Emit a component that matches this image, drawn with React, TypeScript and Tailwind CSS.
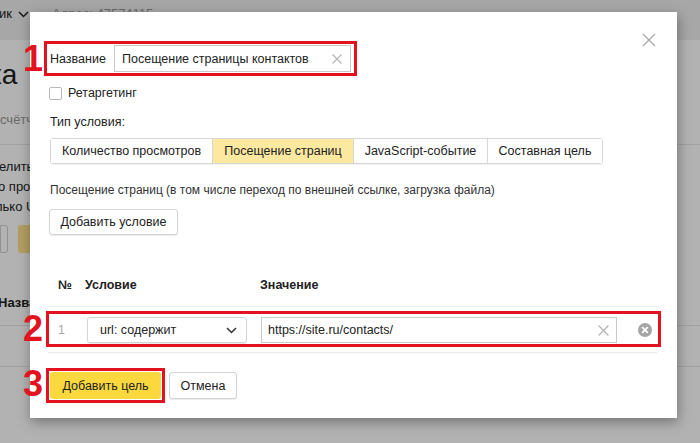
import type { ReactNode } from "react";

const conditionTypes = [
  { label: "Количество просмотров", width: "w-[161px]", active: false },
  { label: "Посещение страниц", width: "w-[141px]", active: true },
  { label: "JavaScript-событие", width: "w-[134px]", active: false },
  { label: "Составная цель", width: "w-[115px]", active: false },
];

function CloseIcon() {
  return (
    <svg width="14" height="14" viewBox="0 0 14 14" fill="none" stroke="#a9a9a9" strokeWidth="1.3">
      <path d="M1 1l12 12M13 1L1 13" />
    </svg>
  );
}

function ClearIcon({ size = 10 }: { size?: number }) {
  return (
    <svg width={size} height={size} viewBox="0 0 10 10" fill="none" stroke="#b3b3b3" strokeWidth="1.1">
      <path d="M0.5 0.5l9 9M9.5 0.5l-9 9" />
    </svg>
  );
}

function Chevron({ color = "#333" }: { color?: string }) {
  return (
    <svg width="11" height="7" viewBox="0 0 11 7" fill="none" stroke={color} strokeWidth="1.5">
      <path d="M1 1l4.5 4.5L10 1" />
    </svg>
  );
}

function RemoveIcon() {
  return (
    <svg width="14" height="14" viewBox="0 0 14 14">
      <circle cx="7" cy="7" r="7" fill="#a5a5a5" />
      <path d="M4.6 4.6l4.8 4.8M9.4 4.6l-4.8 4.8" stroke="#fff" strokeWidth="1.8" strokeLinecap="round" />
    </svg>
  );
}

// red frame drawn around a block without moving it
function Marked({ children, className = "" }: { children: ReactNode; className?: string }) {
  return <div className={`border-[3px] border-[#e3121f] ${className}`}>{children}</div>;
}

function BackgroundPage() {
  return (
    <div className="flex flex-col text-[13px] leading-[16px] text-[#222]">
      <div className="h-[40px] bg-[#f0f0f0] flex items-start pt-[6px]">
        <div className="flex items-center gap-[6px] w-[53px] -ml-[1px]">
          <span>ик</span>
          <Chevron color="#222" />
        </div>
        <span className="text-[#9a9a9a]">Адрес: 47574115</span>
      </div>
      <div className="mt-[19px] -ml-[11px] text-[28px] leading-[32px]">ка</div>
      <div className="mt-[21px] text-[#999]">счётчик</div>
      <div className="mt-[16px] h-px bg-[#e6e6e6]" />
      <div className="mt-[12px] leading-[20px] -ml-[1px]">
        <div>елить цель</div>
        <div className="-ml-[1px]">о просмотру</div>
        <div className="-ml-[4px]">лько URL</div>
      </div>
      <div className="mt-[8px] flex gap-[10px]">
        <div className="w-[8px] h-[28px] border border-[#d0d0d0] rounded-r-[3px] bg-white" />
        <div className="w-[40px] h-[28px] rounded-[3px] bg-[#ffe38f]" />
      </div>
      <div className="mt-[42px] font-bold -ml-[2px]">Название</div>
      <div className="mt-[14px] h-px bg-[#e6e6e6]" />
      <div className="mt-[40px] h-px bg-[#e6e6e6]" />
    </div>
  );
}

function GoalDialog() {
  return (
    <div className="absolute left-[30px] top-[12px] w-[647px] h-[406px] bg-white shadow-[1px_4px_12px_rgba(0,0,0,0.35)] px-[20px] pt-[33px] text-[12.5px] leading-[16px] text-[#222]">
      <button className="absolute right-[21px] top-[21px]">
        <CloseIcon />
      </button>

      {/* Name */}
      <Marked className="-mx-[6px] -my-[4px] w-fit px-[3px] py-[1px]">
        <div className="flex items-center h-[27px]">
          <span className="w-[64px]">Название</span>
          <div className="flex items-center w-[237px] h-[27px] border border-[#c9c9c9] pl-[7px] pr-[8px]">
            <span className="flex-1">Посещение страницы контактов</span>
            <ClearIcon />
          </div>
        </div>
      </Marked>

      <label className="mt-[13px] flex items-center gap-[6px] h-[16px]">
        <span className="-ml-[1px] w-[13px] h-[13px] border border-[#b8b8b8] rounded-[2px] bg-white" />
        <span>Ретаргетинг</span>
      </label>

      <div className="mt-[13px]">Тип условия:</div>

      <div className="mt-[8px] flex w-fit h-[26px] rounded-[3px] border border-[#d6d6d6] shadow-[0_1px_1px_rgba(0,0,0,0.06)]">
        {conditionTypes.map((t, i) => (
          <div
            key={t.label}
            className={`${t.width} flex items-center justify-center ${i > 0 ? "border-l border-[#d6d6d6]" : ""} ${
              t.active ? "bg-[#fde8a0]" : "bg-white"
            }`}
          >
            {t.label}
          </div>
        ))}
      </div>

      <div className="mt-[18px] text-[12px] text-[#333]">
        Посещение страниц (в том числе переход по внешней ссылке, загрузка файла)
      </div>

      <button className="mt-[11px] -ml-[1px] w-[129px] h-[26px] rounded-[3px] border border-[#d4d4d4] bg-white shadow-[0_1px_1px_rgba(0,0,0,0.08)] block">
        Добавить условие
      </button>

      {/* Conditions table */}
      <div className="mt-[42px] -ml-[2px]">
        <div className="flex font-bold pb-[13px] border-b border-[#e9e9e9]">
          <span className="w-[37px] pl-[10px]">№</span>
          <span className="w-[175px]">Условие</span>
          <span>Значение</span>
        </div>
        <div className="pt-[4px] pb-[5px] border-b border-[#e9e9e9]">
          <Marked className="-ml-[2px] -mr-[4px] pt-[3px] pb-[1px] flex items-center">
            <span className="w-[38px] pl-[9px] text-[#a8a8a8]">1</span>
            <div className="w-[160px] h-[26px] flex items-center justify-between pl-[12px] pr-[9px] rounded-[3px] border border-[#d4d4d4] shadow-[0_1px_1px_rgba(0,0,0,0.08)]">
              <span>url: содержит</span>
              <Chevron />
            </div>
            <div className="ml-[14px] w-[356px] h-[26px] flex items-center justify-between pl-[6px] pr-[7px] border border-[#c9c9c9]">
              <span>https://site.ru/contacts/</span>
              <ClearIcon size={11} />
            </div>
            <span className="ml-[21px]">
              <RemoveIcon />
            </span>
          </Marked>
        </div>
      </div>

      {/* Footer */}
      <div className="mt-[19px] flex gap-[8px]">
        <Marked className="-m-[4px] p-[1px]">
          <button className="w-[111px] h-[27px] rounded-[3px] bg-[#fcd83f]">Добавить цель</button>
        </Marked>
        <button className="w-[68px] h-[27px] rounded-[3px] border border-[#d4d4d4] bg-white shadow-[0_1px_1px_rgba(0,0,0,0.08)]">
          Отмена
        </button>
      </div>
    </div>
  );
}

export default function App() {
  return (
    <div className="relative w-[700px] h-[443px] overflow-hidden bg-white font-['Liberation_Sans',Arial,sans-serif]">
      <BackgroundPage />
      <div className="absolute inset-0 bg-black/30" />
      <GoalDialog />
      {/* step numbers */}
      <span className="absolute left-[23px] top-[41px] text-[36px] leading-[36px] font-bold text-[#e3121f]">1</span>
      <span className="absolute left-[23px] top-[311px] text-[36px] leading-[36px] font-bold text-[#e3121f]">2</span>
      <span className="absolute left-[23px] top-[366px] text-[36px] leading-[36px] font-bold text-[#e3121f]">3</span>
    </div>
  );
}
